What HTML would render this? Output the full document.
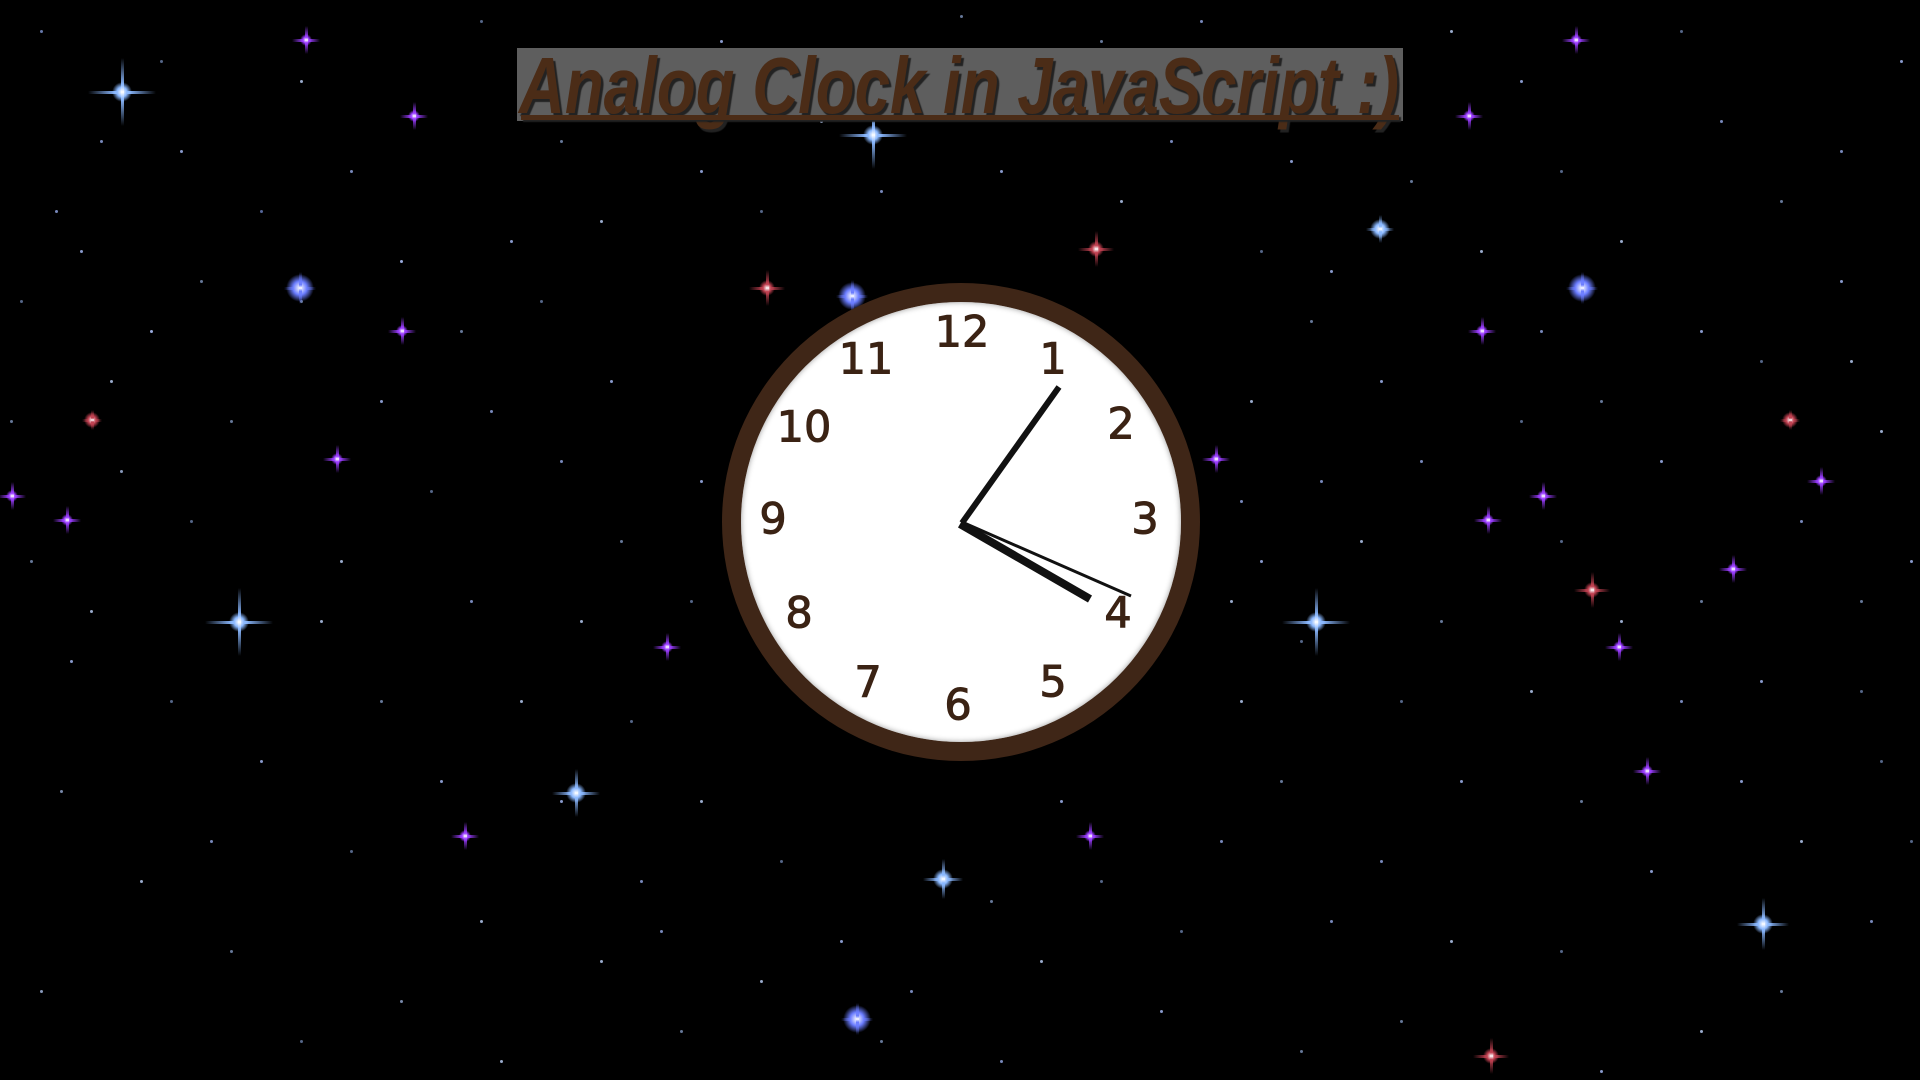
<!DOCTYPE html>
<html><head><meta charset="utf-8">
<style>
html,body{margin:0;padding:0;width:1920px;height:1080px;overflow:hidden;background:#000;}
body{position:relative;font-family:"Liberation Sans",sans-serif;}
.dots{position:absolute;left:0;top:0;width:3px;height:3px;border-radius:50%;background:transparent;}
.s{position:absolute;width:0;height:0;}
.s::before,.s::after{content:"";position:absolute;background:linear-gradient(90deg,transparent,var(--c) 40%,#fff 50%,var(--c) 60%,transparent);}
.s::before{left:calc(var(--r)*-1);top:-1px;width:calc(var(--r)*2);height:3px;}
.s::after{top:calc(var(--r)*-1);left:-1px;height:calc(var(--r)*2);width:3px;background:linear-gradient(180deg,transparent,var(--c) 40%,#fff 50%,var(--c) 60%,transparent);}
.s i{position:absolute;left:calc(var(--g)*-1);top:calc(var(--g)*-1);width:calc(var(--g)*2);height:calc(var(--g)*2);border-radius:50%;background:radial-gradient(circle,#fff 0,var(--c) 35%,transparent 70%);}
.b{--c:#8ab8ff;--r:34px;--g:10px;}
.p{--c:#9a3cff;--r:14px;--g:6px;}
.rd{--c:#c04050;--r:18px;--g:8px;}
.d{--c:#6a7cff;--r:16px;--g:14px;}
.title{position:absolute;left:517px;top:48px;width:886px;height:73px;background:#5e5e5e;}
.title span{position:absolute;left:2px;top:-8px;white-space:nowrap;font-weight:bold;font-style:italic;font-size:80px;color:#4b2c17;text-shadow:3px 3px 1px #222;transform:scaleX(0.795);transform-origin:0 0;}
.ul{position:absolute;left:4px;right:4px;top:67px;height:5px;background:#4b2c17;box-shadow:2px 2px 1px #222;}
.clock{position:absolute;left:722px;top:283px;width:478px;height:478px;border-radius:50%;background:#3f2617;}
.face{position:absolute;left:19px;top:19px;width:440px;height:440px;border-radius:50%;background:#fff;box-shadow:inset 0 0 6px #999;}
.n{position:absolute;font-family:"DejaVu Sans","Liberation Sans",sans-serif;font-size:43px;color:#3b2314;transform:translate(-50%,-50%);line-height:1;-webkit-text-stroke:1px #3b2314;}
</style></head><body>
<div class="dots" style="box-shadow:
40px 30px #6677aa,180px 150px #8899cc,260px 210px #556699,55px 210px #7788bb,20px 300px #556688,150px 330px #99aadd,230px 420px #667799,120px 470px #8899bb,30px 560px #667799,90px 610px #99aacc,170px 700px #556688,260px 760px #8899cc,60px 790px #7788aa,140px 880px #99aacc,230px 950px #667799,40px 990px #8899bb,300px 1040px #556688,350px 170px #7788bb,400px 260px #99aadd,460px 330px #667799,380px 400px #8899cc,430px 490px #556688,340px 560px #99aacc,470px 600px #7788bb,380px 700px #667799,440px 780px #8899cc,350px 850px #556688,480px 920px #99aacc,400px 1000px #7788aa,520px 60px #8899cc,560px 140px #667799,600px 220px #99aacc,540px 300px #556688,610px 380px #8899cc,560px 460px #7788bb,620px 540px #667799,580px 620px #99aacc,630px 720px #556688,560px 800px #8899cc,640px 880px #7788bb,600px 960px #99aacc,680px 1030px #667799,700px 170px #8899cc,760px 210px #556688,820px 120px #99aacc,880px 190px #7788bb,940px 80px #667799,1000px 170px #8899cc,1060px 110px #556688,1120px 200px #99aacc,1170px 140px #7788bb,1240px 90px #667799,1290px 160px #8899cc,700px 800px #99aacc,780px 860px #556688,840px 940px #8899cc,910px 990px #7788bb,990px 900px #667799,1040px 960px #99aacc,1100px 880px #556688,1160px 1010px #8899cc,1220px 840px #7788bb,1280px 780px #667799,1240px 700px #99aacc,1300px 640px #556688,1260px 560px #8899cc,1320px 480px #7788bb,1250px 400px #99aacc,1310px 320px #667799,1260px 250px #556688,1380px 380px #8899cc,1420px 460px #7788bb,1360px 540px #99aacc,1440px 620px #667799,1400px 700px #556688,1460px 780px #8899cc,1380px 860px #7788bb,1450px 940px #99aacc,1400px 1020px #667799,1520px 80px #8899cc,1560px 170px #556688,1620px 240px #99aacc,1540px 330px #7788bb,1600px 400px #667799,1660px 460px #8899cc,1560px 540px #556688,1620px 620px #99aacc,1680px 700px #7788bb,1580px 800px #667799,1650px 870px #8899cc,1560px 950px #556688,1700px 1030px #99aacc,1720px 120px #7788bb,1780px 200px #667799,1840px 280px #8899cc,1760px 360px #556688,1880px 430px #99aacc,1800px 520px #7788bb,1860px 600px #667799,1760px 680px #8899cc,1880px 760px #556688,1800px 840px #99aacc,1870px 920px #7788bb,1780px 990px #667799,1900px 60px #8899cc,1680px 30px #556688,1450px 30px #99aacc,1200px 20px #7788bb,960px 15px #667799,720px 40px #8899cc,480px 20px #556688,300px 80px #99aacc,100px 140px #7788bb,10px 420px #667799,1910px 560px #8899cc,1910px 840px #556688,500px 1060px #99aacc,1000px 1060px #7788bb,1300px 1050px #667799,1600px 1070px #8899cc,
80px 250px #8899cc,200px 280px #667799,110px 380px #99aacc,190px 520px #556688,70px 660px #8899cc,210px 840px #7788bb,320px 620px #99aacc,300px 300px #667799,510px 240px #8899cc,490px 410px #7788bb,520px 700px #99aacc,690px 600px #556688,700px 480px #8899cc,660px 930px #7788bb,760px 980px #99aacc,880px 1040px #667799,1060px 800px #8899cc,1180px 930px #556688,1230px 600px #99aacc,1240px 500px #7788bb,1330px 270px #8899cc,1410px 180px #667799,1480px 250px #99aacc,1520px 420px #556688,1700px 330px #8899cc,1840px 150px #7788bb,1850px 360px #99aacc,1700px 600px #667799,1740px 780px #8899cc,1860px 690px #556688,1530px 690px #99aacc,1330px 920px #7788bb,820px 60px #8899cc,1100px 40px #667799,1340px 60px #99aacc,160px 60px #556688;"></div>

<div class="s b" style="left:122px;top:92px"><i></i></div>
<div class="s b" style="left:873px;top:135px"><i></i></div>
<div class="s b" style="left:239px;top:622px"><i></i></div>
<div class="s b" style="left:1316px;top:622px"><i></i></div>
<div class="s b" style="left:943px;top:879px;--r:20px"><i></i></div>
<div class="s b" style="left:576px;top:793px;--r:24px"><i></i></div>
<div class="s b" style="left:1763px;top:924px;--r:26px"><i></i></div>
<div class="s b" style="left:1380px;top:229px;--r:14px"><i></i></div>
<div class="s p" style="left:306px;top:40px"><i></i></div>
<div class="s p" style="left:414px;top:116px"><i></i></div>
<div class="s p" style="left:1576px;top:40px"><i></i></div>
<div class="s p" style="left:1469px;top:116px"><i></i></div>
<div class="s p" style="left:402px;top:331px"><i></i></div>
<div class="s p" style="left:1482px;top:331px"><i></i></div>
<div class="s p" style="left:337px;top:459px"><i></i></div>
<div class="s p" style="left:1216px;top:459px"><i></i></div>
<div class="s p" style="left:67px;top:520px"><i></i></div>
<div class="s p" style="left:12px;top:496px"><i></i></div>
<div class="s p" style="left:1488px;top:520px"><i></i></div>
<div class="s p" style="left:1543px;top:496px"><i></i></div>
<div class="s p" style="left:1821px;top:481px"><i></i></div>
<div class="s p" style="left:667px;top:647px"><i></i></div>
<div class="s p" style="left:1619px;top:647px"><i></i></div>
<div class="s p" style="left:1733px;top:569px"><i></i></div>
<div class="s p" style="left:465px;top:836px"><i></i></div>
<div class="s p" style="left:1090px;top:836px"><i></i></div>
<div class="s p" style="left:1647px;top:771px"><i></i></div>
<div class="s rd" style="left:1096px;top:249px"><i></i></div>
<div class="s rd" style="left:767px;top:288px"><i></i></div>
<div class="s rd" style="left:1592px;top:590px"><i></i></div>
<div class="s rd" style="left:1491px;top:1056px"><i></i></div>
<div class="s rd" style="left:92px;top:420px;--r:10px"><i></i></div>
<div class="s rd" style="left:1790px;top:420px;--r:10px"><i></i></div>
<div class="s d" style="left:300px;top:288px"><i></i></div>
<div class="s d" style="left:1582px;top:288px"><i></i></div>
<div class="s d" style="left:857px;top:1019px"><i></i></div>
<div class="s d" style="left:852px;top:296px"><i></i></div>

<div class="title"><span>Analog Clock in JavaScript :)</span><div class="ul"></div></div>

<div class="clock"><div class="face"></div></div>
<div class="n" style="left:962px;top:333px">12</div>
<div class="n" style="left:1053px;top:360px">1</div>
<div class="n" style="left:1121px;top:425px">2</div>
<div class="n" style="left:1145px;top:520px">3</div>
<div class="n" style="left:1118px;top:614px">4</div>
<div class="n" style="left:1053px;top:683px">5</div>
<div class="n" style="left:958px;top:706px">6</div>
<div class="n" style="left:868px;top:683px">7</div>
<div class="n" style="left:799px;top:614px">8</div>
<div class="n" style="left:773px;top:520px">9</div>
<div class="n" style="left:804px;top:428px">10</div>
<div class="n" style="left:866px;top:360px">11</div>
<svg width="1920" height="1080" style="position:absolute;left:0;top:0">
<line x1="962" y1="523" x2="1059" y2="387" stroke="#111" stroke-width="6"/>
<line x1="960" y1="524" x2="1090" y2="599" stroke="#111" stroke-width="8"/>
<line x1="962" y1="522" x2="1131" y2="596" stroke="#111" stroke-width="3"/>
</svg>
</body></html>
